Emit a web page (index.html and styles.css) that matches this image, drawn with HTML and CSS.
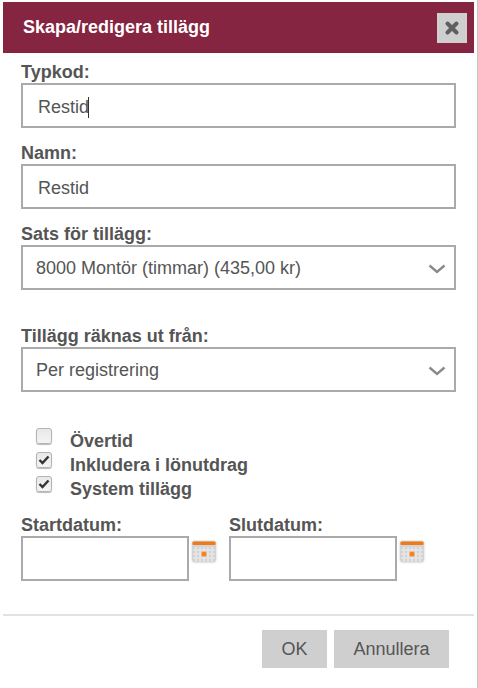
FILE: index.html
```html
<!DOCTYPE html>
<html lang="sv">
<head>
    <meta charset="UTF-8">
    <title>Skapa/redigera tillägg</title>
    <link rel="stylesheet" href="styles.css">
</head>
<body>
    <div class="dialog">
        <header class="titlebar">
            <h1>Skapa/redigera tillägg</h1>
            <button class="close" type="button" aria-label="Stäng">
                <svg width="16" height="16" viewBox="0 0 16 16"><path d="M3.5 3.5l9 9M12.5 3.5l-9 9" stroke="#5f5f5f" stroke-width="4" stroke-linecap="round"/></svg>
            </button>
        </header>
        <main class="form">
            <label class="field-label">Typkod:</label>
            <div class="box text-box"><span>Restid</span><span class="caret"></span></div>

            <label class="field-label gap-namn">Namn:</label>
            <div class="box text-box">Restid</div>

            <label class="field-label gap-namn">Sats för tillägg:</label>
            <div class="box select-box">
                <span>8000 Montör (timmar) (435,00 kr)</span>
                <svg width="18" height="10" viewBox="0 0 18 10"><path d="M1.5 1.5L9 8l7.500-6.500" fill="none" stroke="#8a8a8a" stroke-width="2.400"/></svg>
            </div>

            <label class="field-label gap-select">Tillägg räknas ut från:</label>
            <div class="box select-box">
                <span>Per registrering</span>
                <svg width="18" height="10" viewBox="0 0 18 10"><path d="M1.5 1.5L9 8l7.500-6.500" fill="none" stroke="#8a8a8a" stroke-width="2.400"/></svg>
            </div>

            <div class="checks">
                <div class="check-row">
                    <span class="check"></span>
                    <span class="check-text">Övertid</span>
                </div>
                <div class="check-row">
                    <span class="check"><svg width="12" height="10" viewBox="0 0 12 10"><path d="M1.500 5l3 3 6-6.500" fill="none" stroke="#333" stroke-width="2.400"/></svg></span>
                    <span class="check-text">Inkludera i lönutdrag</span>
                </div>
                <div class="check-row">
                    <span class="check"><svg width="12" height="10" viewBox="0 0 12 10"><path d="M1.500 5l3 3 6-6.500" fill="none" stroke="#333" stroke-width="2.400"/></svg></span>
                    <span class="check-text">System tillägg</span>
                </div>
            </div>

            <div class="dates">
                <div class="date">
                    <label class="field-label">Startdatum:</label>
                    <div class="date-row">
                        <div class="box date-box"></div>
                        <svg class="cal" width="24" height="22" viewBox="0 0 24 22">
                            <rect x="0.500" y="1" width="23" height="20" rx="2" fill="#d4d4d4"/>
                            <path d="M4 6v15M8 6v15M12 6v15M16 6v15M20 6v15M1 9h22M1 13h22M1 17h22" stroke="#ececec" stroke-width="1.200"/>
                            <rect x="0.500" y="0.500" width="23" height="3.500" rx="1" fill="#ee7a1c"/>
                            <circle cx="12" cy="13" r="2.600" fill="#f5821f"/>
                        </svg>
                    </div>
                </div>
                <div class="date">
                    <label class="field-label">Slutdatum:</label>
                    <div class="date-row">
                        <div class="box date-box"></div>
                        <svg class="cal" width="24" height="22" viewBox="0 0 24 22">
                            <rect x="0.500" y="1" width="23" height="20" rx="2" fill="#d4d4d4"/>
                            <path d="M4 6v15M8 6v15M12 6v15M16 6v15M20 6v15M1 9h22M1 13h22M1 17h22" stroke="#ececec" stroke-width="1.200"/>
                            <rect x="0.500" y="0.500" width="23" height="3.500" rx="1" fill="#ee7a1c"/>
                            <circle cx="12" cy="13" r="2.600" fill="#f5821f"/>
                        </svg>
                    </div>
                </div>
            </div>
        </main>
        <footer class="actions">
            <button class="btn btn-ok" type="button">OK</button>
            <button class="btn btn-cancel" type="button">Annullera</button>
        </footer>
    </div>
</body>
</html>
```

FILE: styles.css
```css
html, body {
    margin: 0;
    padding: 0;
    background: #fff;
}
body {
    font-family: "Liberation Sans", Arial, sans-serif;
    color: #555;
    font-size: 18px;
    height: 688px;
    overflow: hidden;
}
.dialog {
    box-sizing: border-box;
    width: 478px;
    height: 688px;
    padding: 2px 1px 0 3px;
    border-right: 1px solid #c4c4c4;
}
.titlebar {
    height: 51px;
    width: 471px;
    background: #862541;
    display: flex;
    align-items: center;
    justify-content: space-between;
    padding: 0 7px 0 20px;
    box-sizing: border-box;
}
.titlebar h1 {
    margin: 0 0 1px;
    color: #fff;
    font-size: 18px;
    font-weight: bold;
}
.close {
    width: 30px;
    height: 30px;
    padding: 0;
    border: 0;
    background: #cfcfcf;
    display: flex;
    align-items: center;
    justify-content: center;
}
.form {
    padding: 10px 0 0 18px;
}
.field-label {
    display: block;
    font-weight: bold;
    font-size: 18px;
    line-height: 18px;
    height: 20px;
}
.gap-namn {
    margin-top: 16px;
}
.gap-select {
    margin-top: 37px;
}
.box {
    box-sizing: border-box;
    border: 2px solid #aaa;
    background: #fff;
    height: 45px;
    width: 435px;
    display: flex;
    align-items: center;
}
.text-box {
    padding: 4px 0 0 15px;
}
.caret {
    width: 1px;
    height: 21px;
    margin-left: -1px;
    background: #333;
}
.select-box {
    padding: 2px 8px 0 13px;
    justify-content: space-between;
}
.checks {
    padding: 36px 0 0 15px;
}
.check-row {
    display: flex;
    align-items: flex-start;
    height: 24px;
}
.check {
    box-sizing: border-box;
    width: 16px;
    height: 16px;
    border: 1px solid #b4b4b4;
    border-radius: 3px;
    background: linear-gradient(#e8e8e8, #f4f4f4);
    box-shadow: 0 1px 1px #bbb;
    display: flex;
    align-items: center;
    justify-content: center;
}
.check-text {
    margin-left: 18px;
    margin-top: 4px;
    font-weight: bold;
    line-height: 18px;
}
.dates {
    display: flex;
    gap: 13px;
    margin-top: 16px;
}
.date {
    width: 195px;
}
.date-row {
    display: flex;
    align-items: flex-start;
    gap: 3px;
}
.date-box {
    width: 168px;
}
.cal {
    margin-top: 5px;
    flex: none;
    filter: drop-shadow(0 0 1px #aaa);
}
.actions {
    width: 471px;
    box-sizing: border-box;
    margin-top: 33px;
    border-top: 2px solid #e2e2e2;
    padding: 14px 25px 0 0;
    display: flex;
    justify-content: flex-end;
    gap: 7px;
}
.btn {
    height: 38px;
    padding: 0;
    border: 0;
    background: #cfcfcf;
    color: #555;
    font-family: inherit;
    font-size: 18px;
}
.btn-ok {
    width: 65px;
}
.btn-cancel {
    width: 115px;
}
```
